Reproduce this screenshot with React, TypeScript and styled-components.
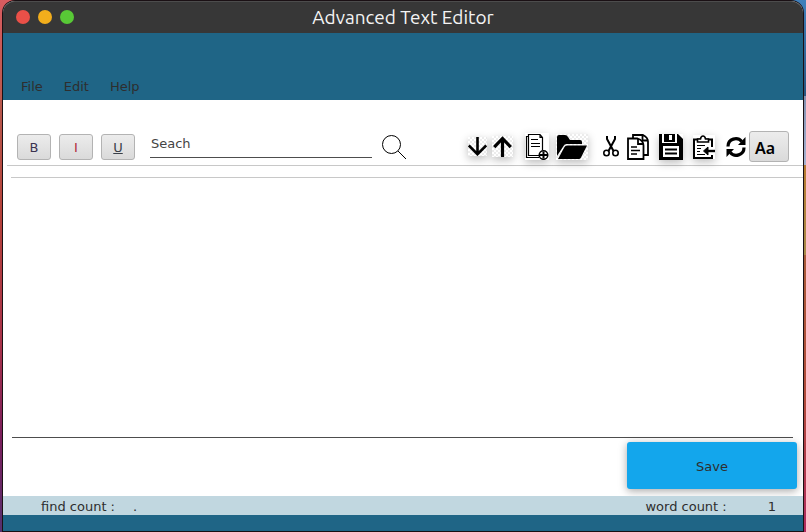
import React from "react";
import styled, { createGlobalStyle, css } from "styled-components";

const GlobalStyle = createGlobalStyle`
  *, *::before, *::after { box-sizing: border-box; }
  body { margin: 0; }
  button, input, textarea { font: inherit; color: inherit; }
`;

const Desktop = styled.div`
  min-height: 100vh;
  display: flex;
  padding: 1px 3px;
  color: #2e2e2e;
  font: 13px/16px "DejaVu Sans", Verdana, sans-serif;
  background:
    linear-gradient(#d95c60, #b8584c 20%, #b5423a 40%, #a8324a 65%, #7b1f5c 82%, #56306f) left / 50% 100% no-repeat,
    linear-gradient(#3f80bb, #2a557f 18%, #8390b0 18%, #a7b3d2 31%, #b87a30 31%, #a88a48 48%, #a85a38 48%, #b04a3a 75%, #b02a5e) right / 50% 100% no-repeat;
`;

const Window = styled.div`
  flex: 1;
  display: flex;
  flex-direction: column;
  background: #ffffff;
  border-radius: 12px 12px 0 0;
  box-shadow: 0 0 0 1px #1a1014;
`;

const TitleBar = styled.header`
  display: grid;
  grid-template-columns: 1fr auto 1fr;
  align-items: center;
  height: 32px;
  padding: 0 13px 2px;
  background: #373737;
  border-top: 1px solid #4c4c4c;
  border-radius: 12px 12px 0 0;
`;

const Lights = styled.div`
  display: flex;
  gap: 8px;
`;

const Light = styled.button<{ $color: string }>`
  width: 14px;
  height: 14px;
  padding: 0;
  border: 0;
  border-radius: 50%;
  background: ${(p) => p.$color};
`;

const Title = styled.h1`
  margin: 0;
  color: #f4f4f4;
  font: 400 19px/24px "Ubuntu", "Noto Sans", sans-serif;
`;

const MenuBar = styled.nav`
  display: flex;
  align-items: flex-end;
  gap: 21px;
  height: 67px;
  padding: 0 18px 5px;
  background: #1f6586;
`;

const MenuButton = styled.button`
  padding: 0;
  border: 0;
  background: none;
`;

const Toolbar = styled.div`
  display: flex;
  align-items: center;
  height: 66px;
  margin-left: 4px;
  padding: 28px 14px 0 10px;
  border-bottom: 1px solid #c8c8c8;
`;

const raised = css`
  border: 1px solid #b3b3b3;
  border-radius: 3px;
  background: linear-gradient(#ececec, #dadada);
`;

const Formats = styled.div`
  display: flex;
  gap: 8px;
`;

const FormatButton = styled.button<{ $color: string; $underline?: boolean }>`
  ${raised}
  width: 34px;
  height: 26px;
  padding: 2px 0 0;
  color: ${(p) => p.$color};
  text-decoration: ${(p) => (p.$underline ? "underline" : "none")};
`;

const SearchForm = styled.form`
  flex: 0 1 256px;
  display: flex;
  align-items: flex-start;
  gap: 10px;
  margin: 0 auto 0 15px;
`;

const SearchInput = styled.input`
  flex: 1;
  min-width: 0;
  height: 24px;
  padding: 0 1px 5px;
  border: 0;
  border-bottom: 1px solid #4d4d4d;
  outline: 0;
  background: none;
  &::placeholder { color: #444444; opacity: 1; }
`;

const Tools = styled.div`
  display: grid;
  grid-template-columns: 24px 33px 31px 47px 24px 32px 34px 33px 23px 40px;
  align-items: center;
  justify-items: start;
`;

const IconButton = styled.button<{ $raised?: boolean; $checker?: boolean }>`
  display: flex;
  padding: 0;
  border: 0;
  color: #000000;
  background: ${(p) =>
    p.$checker ? "repeating-conic-gradient(#ececec 0 25%, #ffffff 0 50%) 0 0 / 4px 4px" : "none"};
  box-shadow: ${(p) => (p.$raised ? "0 3px 9px rgba(0, 0, 0, 0.26)" : "none")};
`;

const FontButton = styled.button`
  ${raised}
  width: 40px;
  height: 31px;
  padding: 2px 8px 0 0;
  color: #000000;
  font: 600 16px/24px "Noto Sans", sans-serif;
`;

const Editor = styled.textarea`
  flex: 1;
  margin: 11px 0 0 8px;
  padding: 8px;
  border: 0;
  border-top: 1px solid #c8c8c8;
  outline: 0;
  resize: none;
  background: none;
`;

const Actions = styled.div`
  display: flex;
  justify-content: flex-end;
  margin: 0 10px 0 9px;
  padding: 4px 0 7px;
  border-top: 1px solid #4d4d4d;
`;

const SaveButton = styled.button`
  width: 170px;
  height: 47px;
  margin-right: -4px;
  padding: 2px 0 0;
  border: 0;
  border-radius: 3px;
  background: #13a6ec;
  box-shadow: 0 2px 8px rgba(0, 0, 0, 0.35);
`;

const StatusBar = styled.footer`
  display: flex;
  justify-content: space-between;
  padding: 3px 27px 0 38px;
  background: #c1d7e0;
  border-bottom: 16px solid #1f6586;
`;

const Count = styled.div<{ $gap: number }>`
  display: flex;
  gap: ${(p) => p.$gap}px;
`;

type IconProps = { w: number; h: number; children: React.ReactNode };

const Icon = ({ w, h, children }: IconProps) => (
  <svg width={w} height={h} viewBox={`0 0 ${w} ${h}`} fill="none" stroke="currentColor" aria-hidden="true">
    {children}
  </svg>
);

export default function App() {
  return (
    <>
      <GlobalStyle />
      <Desktop>
        <Window>
          <TitleBar>
            <Lights>
              <Light $color="#ea5048" aria-label="Close" />
              <Light $color="#f2ae1c" aria-label="Minimize" />
              <Light $color="#58c936" aria-label="Maximize" />
            </Lights>
            <Title>Advanced Text Editor</Title>
          </TitleBar>
          <MenuBar>
            <MenuButton>File</MenuButton>
            <MenuButton>Edit</MenuButton>
            <MenuButton>Help</MenuButton>
          </MenuBar>
          <Toolbar>
            <Formats>
              <FormatButton $color="#3b3350" aria-label="Bold">B</FormatButton>
              <FormatButton $color="#b02a3c" aria-label="Italic">I</FormatButton>
              <FormatButton $color="#3a4048" $underline aria-label="Underline">U</FormatButton>
            </Formats>
            <SearchForm>
              <SearchInput placeholder="Seach" aria-label="Search" />
              <IconButton type="button" aria-label="Find">
                <Icon w={24} h={25}>
                  <circle cx="9.5" cy="10.5" r="9" />
                  <path d="M16 17l8 8" />
                </Icon>
              </IconButton>
            </SearchForm>
            <Tools>
              <IconButton $raised $checker aria-label="Next">
                <Icon w={19} h={19}>
                  <path d="M9.5 0v17M.8 8.5l8.700 8.700 8.700-8.700" strokeWidth="2.6" />
                </Icon>
              </IconButton>
              <IconButton $raised $checker aria-label="Previous">
                <Icon w={21} h={21}>
                  <path d="M10.5 21V2M2.2 11.2l8.300-8.700 8.300 8.700" strokeWidth="3.2" />
                </Icon>
              </IconButton>
              <IconButton $raised aria-label="New">
                <Icon w={24} h={27}>
                  <path d="M14.500 22.500H3.500V1.500h11.500l2.500 3V17M3.500 3.500h-2v21H14M15 1.500v3h3" strokeWidth="1.200" />
                  <path d="M6 6.500h7M6 10.500h9M6 13.500h9" />
                  <circle cx="18.500" cy="22" r="4.300" fill="#fff" strokeWidth="1.500" />
                  <path d="M18.500 18.500v7M15 22h7" strokeWidth="2" />
                </Icon>
              </IconButton>
              <IconButton $raised $checker aria-label="Open">
                <Icon w={32} h={26}>
                  <path
                    d="M1 22V3q0-2 2-2h6q2 0 3 2l2 3h10q2 0 2 2v2H10.500q-2 0-3 2zM2 25L8.500 13q.7-1.500 2.500-1.500h20l-6 12q-.7 1.500-2.200 1.500z"
                    fill="currentColor"
                    stroke="none"
                  />
                </Icon>
              </IconButton>
              <IconButton aria-label="Cut">
                <Icon w={16} h={21}>
                  <path d="M4 0v3l6.500 12M12 0v3L5.500 15" strokeWidth="2" />
                  <circle cx="3.500" cy="17" r="2.700" strokeWidth="1.600" />
                  <circle cx="12.500" cy="17" r="2.700" strokeWidth="1.600" />
                </Icon>
              </IconButton>
              <IconButton aria-label="Copy">
                <Icon w={22} h={26}>
                  <path d="M6 4V1h10q5 2.500 5 6.500V21h-4M15.500 1v5.500H21" strokeWidth="1.800" />
                  <path d="M1 4.500h9.500q6 2 6 7V25H1zM11 4.500V10h5.500" strokeWidth="1.800" fill="#fff" />
                  <path d="M4 13h6M4 16.500h9M4 20h6" strokeWidth="1.600" />
                </Icon>
              </IconButton>
              <IconButton $raised aria-label="Save file">
                <Icon w={24} h={26}>
                  <path d="M0 0h19l5 5v21H0z" fill="currentColor" stroke="none" />
                  <path d="M3 0h2v8H3zM10 1h3v5h-3zM16 0h2v8h-2zM3 8h15v1H3zM4 12h16v11H4z" fill="#fff" stroke="none" />
                  <path d="M6 15.500h12M6 19.500h12" strokeWidth="2" />
                </Icon>
              </IconButton>
              <IconButton $raised aria-label="Paste">
                <Icon w={22} h={24}>
                  <path d="M19 12V4.500H1V23h18v-3" strokeWidth="2" />
                  <path d="M4.500 7V4h3q.5-3 2.500-3t2.500 3h3v3z" fill="#fff" strokeWidth="1.600" />
                  <path d="M4 10.500h8M4 13.500h4M4 16.500h3M4 19.500h8" strokeWidth="1.200" />
                  <path d="M22 16H14" strokeWidth="2.400" />
                  <path d="M10.500 16l4.500-4v8z" fill="currentColor" />
                </Icon>
              </IconButton>
              <IconButton aria-label="Refresh">
                <Icon w={20} h={20}>
                  <path d="M2 9.500C2 1.500 11.500-.5 15.800 4.500M18 10.500c0 8-9.500 10-13.800 5" strokeWidth="3.200" />
                  <path d="M19.500 0v8H12zM.5 20v-8H8z" fill="currentColor" stroke="none" />
                </Icon>
              </IconButton>
              <FontButton aria-label="Font">Aa</FontButton>
            </Tools>
          </Toolbar>
          <Editor aria-label="Document" />
          <Actions>
            <SaveButton>Save</SaveButton>
          </Actions>
          <StatusBar>
            <Count $gap={18}>
              <span>find count :</span>
              <output>.</output>
            </Count>
            <Count $gap={41}>
              <span>word count :</span>
              <output>1</output>
            </Count>
          </StatusBar>
        </Window>
      </Desktop>
    </>
  );
}
